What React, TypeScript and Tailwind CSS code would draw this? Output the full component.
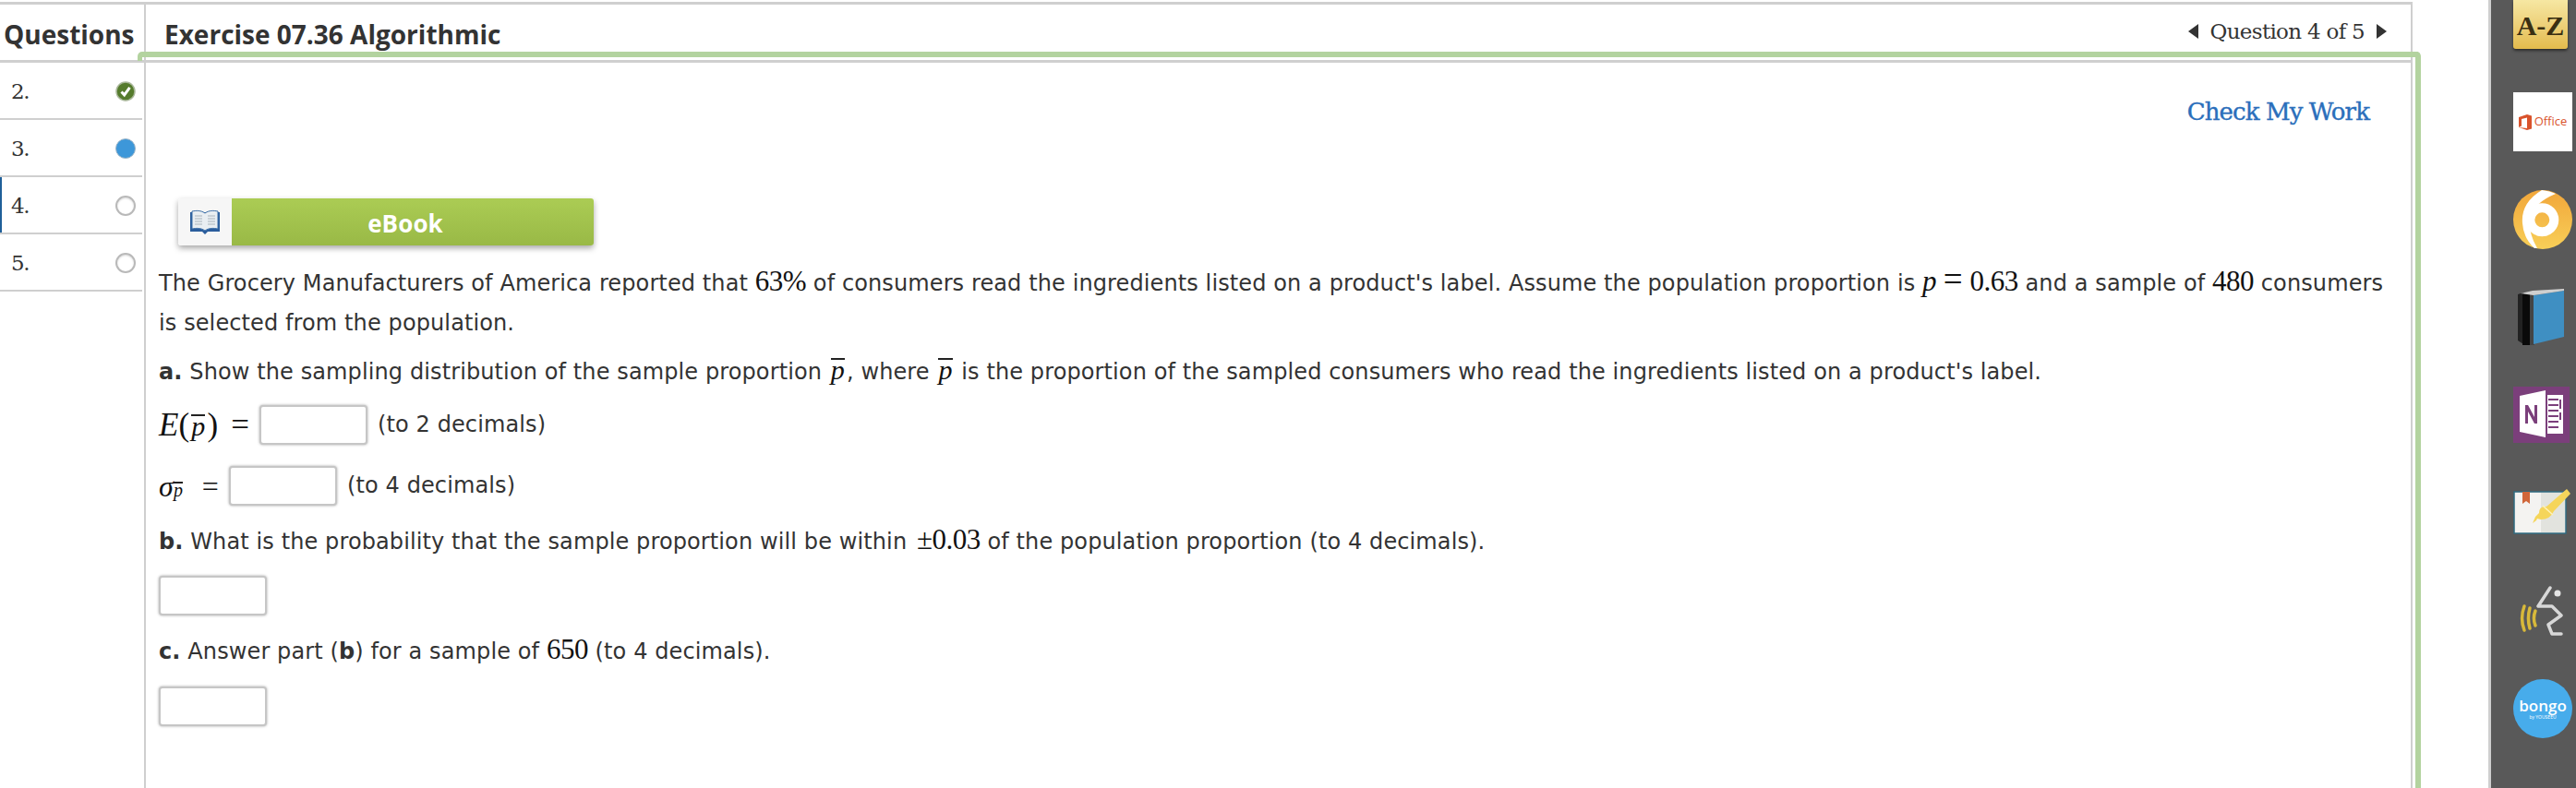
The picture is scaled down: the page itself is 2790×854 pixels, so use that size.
const bodyFont = "font-['DejaVu_Sans',sans-serif]";

function StatusDot({ kind }: { kind: "done" | "current" | "empty" }) {
  if (kind === "done") {
    return (
      <svg width="22" height="22" viewBox="0 0 22 22">
        <circle cx="11" cy="11" r="10" fill="#557b2c" stroke="#a9b79a" strokeWidth="1.5" />
        <path d="M6.5 11.5l3.2 3.4 5.8-8" fill="none" stroke="#fff" strokeWidth="3" />
      </svg>
    );
  }
  if (kind === "current") {
    return <div className="h-[22px] w-[22px] rounded-full border border-[#9db6c8] bg-[#3d97d9]" />;
  }
  return <div className="h-[22px] w-[22px] rounded-full border-2 border-[#b9b9b9] bg-white shadow-[inset_0_1px_2px_rgba(0,0,0,0.15)]" />;
}

function QuestionRow({ n, kind, active }: { n: string; kind: "done" | "current" | "empty"; active?: boolean }) {
  return (
    <div className={`flex h-[62px] w-[154px] items-center justify-between border-b-[2px] border-[#cfcfcf] pt-[2px] pr-[7px] pl-[12px] ${active ? "shadow-[inset_2px_0_0_#1f5f99]" : ""}`}>
      <span className="font-['DejaVu_Serif',serif] text-[23px] tracking-[-1.5px] text-[#333]">{n}</span>
      <StatusDot kind={kind} />
    </div>
  );
}

function Answer() {
  return <div className="h-[43px] w-[117px] shrink-0 rounded-[4px] border-[2px] border-[#c6c6c6] bg-white shadow-[0_0_3px_rgba(0,0,0,0.35)]" />;
}

function M({ children, i }: { children: React.ReactNode; i?: boolean }) {
  return <span className={`font-['Liberation_Serif',serif] text-[31px] leading-none tracking-[-0.5px] text-[#111] ${i ? "italic" : ""}`}>{children}</span>;
}

function PBar() {
  return <span className="mx-[2px] inline-block border-t-[2px] border-[#222] font-['Liberation_Serif',serif] text-[30px] leading-[22px] italic text-[#111]">p</span>;
}

function EBookButton() {
  return (
    <div className="ml-[35px] flex h-[51px] w-[450px] rounded-[3px] shadow-[0_3px_6px_rgba(0,0,0,0.35)]">
      <div className="flex w-[58px] items-center justify-center rounded-l-[3px] bg-[#f6f6f6]">
        <svg width="34" height="28" viewBox="0 0 34 28">
          <path d="M1 3h32v21H20l-3 3-3-3H1z" fill="#2a5d9c" />
          <path d="M3 2c5-1 10-1 14 2 4-3 9-3 14-2v19c-5-1-10-1-14 2-4-3-9-3-14-2z" fill="#e9eef2" stroke="#3b6ea8" />
          <path d="M6 7h8M6 10h8M6 13h8M6 16h8M20 7h8M20 10h8M20 13h8M20 16h8" stroke="#a9b3bb" strokeWidth="1.2" />
        </svg>
      </div>
      <div className="flex flex-1 items-center justify-center rounded-r-[3px] bg-gradient-to-b from-[#abcc54] to-[#99b946] pt-[4px] pr-[16px] font-['Open_Sans',sans-serif] text-[26px] font-bold text-white">
        eBook
      </div>
    </div>
  );
}

function RightRail() {
  return (
    <div className="flex h-full w-[95px] flex-col border-l-[3px] border-[#cfcfcf] bg-[#595959] pl-[24px]">
      <div className="flex h-[53px] w-[59px] items-end justify-center rounded-b-[3px] bg-gradient-to-b from-[#f6e7a2] to-[#e4bb4c] pb-[10px] font-['Liberation_Serif',serif] text-[30px] leading-none font-bold text-[#3a2f12] shadow-[0_2px_3px_rgba(0,0,0,0.5)]">
        A-Z
      </div>
      <div className="mt-[47px] flex h-[64px] w-[64px] items-center justify-center gap-[3px] bg-white font-['Open_Sans',sans-serif] text-[13px] text-[#d9532c]">
        <svg width="14" height="17" viewBox="0 0 14 17">
          <path d="M0 3l9-3 5 1.5v14L9 17l-9-3 9 1V3.500L3 5v7.500L0 14z" fill="#d9532c" />
        </svg>
        Office
      </div>
      <svg className="mt-[42px]" width="64" height="64" viewBox="0 0 64 64">
        <defs>
          <linearGradient id="og" x1="0" y1="0" x2="0" y2="1">
            <stop offset="0" stopColor="#f1a63a" />
            <stop offset="1" stopColor="#f8cf58" />
          </linearGradient>
        </defs>
        <circle cx="32" cy="32" r="32" fill="url(#og)" />
        <circle cx="31.300" cy="32.300" r="13" fill="none" stroke="#fff" strokeWidth="10" />
        <path d="M31 0Q8 14 10 36Q11 52 23 63L26 63Q16 46 18 30Q22 14 46 4Q40 1 31 0Z" fill="#fff" />
      </svg>
      <svg className="mt-[43px] ml-[5px]" width="52" height="61" viewBox="0 0 52 61">
        <path d="M0 6L6 4v56L0 56z" fill="#222" />
        <path d="M5 4h8v57H5z" fill="#0a0a0a" />
        <path d="M13 6h5v55h-5z" fill="#444" />
        <path d="M17 7L50 2v50L17 60z" fill="#3f8fc2" />
        <path d="M3 5L16 2l34-2v2L17 7z" fill="#cfcfcf" />
      </svg>
      <svg className="mt-[45px]" width="61" height="61" viewBox="0 0 61 61">
        <rect width="61" height="61" fill="#7b3f7b" />
        <path d="M7 10l28-6v51L7 49z" fill="#fff" />
        <path d="M37 9h17v42H37z" fill="#fff" />
        <path d="M38 14h11M38 20h11M38 26h11M38 32h11M38 38h11M38 44h11M51 14v10M51 28v8" stroke="#7b3f7b" strokeWidth="2" />
        <path d="M13 40V20h3l7 13V20h3v20h-3l-7-13v13z" fill="#7b3f7b" />
      </svg>
      <svg className="mt-[50px]" width="62" height="50" viewBox="0 0 62 50">
        <path d="M1 3h56v45H1z" fill="#f4f3f1" stroke="#2f6b80" strokeWidth="1.500" />
        <path d="M30 4h26v43H30z" fill="#e2e3de" />
        <path d="M10 3h8v13l-4-3-4 3z" fill="#d0663a" />
        <path d="M58 0L62 5L44 24Q40 33 30 33L26 32L25 34L21 37L24 30L28 26Q28 18 36 19Z" fill="#f5d55a" />
        <path d="M32 18L43 28" stroke="#fff3b8" strokeWidth="1.500" />
      </svg>
      <svg className="mt-[55px] ml-[5px]" width="50" height="57" viewBox="0 0 50 57">
        <path d="M35 2L22 22H37L47 32L33 42L37 52H47" fill="none" stroke="#d8d8d8" strokeWidth="3.500" strokeLinejoin="round" strokeLinecap="round" />
        <circle cx="43" cy="8" r="3.500" fill="#e4e4e4" />
        <path d="M7 22c-3 8-3 18 0 26M13 24c-2 7-2 15 0 22M19 27c-2 5-2 11 0 16" fill="none" stroke="#d8b93a" strokeWidth="3.500" strokeLinecap="round" />
      </svg>
      <div className="mt-[44px] flex h-[64px] w-[64px] flex-col items-center justify-center rounded-full bg-[#47aceb] text-white">
        <span className="font-['Open_Sans',sans-serif] text-[17px] leading-[18px] font-semibold">bongo</span>
        <span className="font-['Open_Sans',sans-serif] text-[5px] leading-[6px]">by YOUSEEU</span>
      </div>
    </div>
  );
}

export default function App() {
  return (
    <div className="relative flex h-[854px] w-[2790px] justify-between overflow-hidden bg-white">
      <div className="mt-[2px] flex h-[852px] w-[2613px] flex-col border-t-[3px] border-r-[2px] border-[#cfcfcf]">
        <div className="flex h-[63px] shrink-0 border-b-[3px] border-[#cfcfcf]">
          <div className="flex w-[158px] items-start border-r-[2px] border-[#cfcfcf] pt-[12px] pl-[4px] font-['Open_Sans',sans-serif] text-[28px] leading-[40px] font-bold text-[#333]">
            Questions
          </div>
          <div className="flex flex-1 items-start justify-between pt-[12px] pr-[26px] pl-[20px]">
            <span className="font-['Open_Sans',sans-serif] text-[28px] leading-[40px] font-bold text-[#333]">Exercise 07.36 Algorithmic</span>
            <div className="flex items-center gap-[13px] font-['DejaVu_Serif',serif] text-[23px] leading-[34px] tracking-[-0.7px] text-[#333]">
              <svg width="11" height="16" viewBox="0 0 11 16"><path d="M11 0v16L0 8z" fill="#333" /></svg>
              <span>Question 4 of 5</span>
              <svg width="11" height="16" viewBox="0 0 11 16"><path d="M0 0v16l11-8z" fill="#333" /></svg>
            </div>
          </div>
        </div>
        <div className="flex flex-1">
          <div className="w-[158px] shrink-0 border-r-[2px] border-[#cfcfcf]">
            <QuestionRow n="2." kind="done" />
            <QuestionRow n="3." kind="current" />
            <QuestionRow n="4." kind="empty" active />
            <QuestionRow n="5." kind="empty" />
          </div>
          <div className={`flex-1 ${bodyFont} text-[24px] tracking-[0.11px] text-[#333]`}>
            <div className="flex justify-end pt-[31px] pr-[45px] font-['DejaVu_Serif',serif] text-[26px] leading-[44px] tracking-[-0.9px] text-[#2a6ebb] [-webkit-text-stroke:0.4px_#2a6ebb]">
              Check My Work
            </div>
            <div className="mt-[72px]">
              <EBookButton />
            </div>
            <div className="mt-[18px] pl-[14px] leading-[43px]">
              <p>
                The Grocery Manufacturers of America reported that <M>63%</M> of consumers read the ingredients listed on a product's label. Assume the population proportion is <M i>p</M> <span className="font-['Liberation_Serif',serif] text-[37px] leading-none text-[#111]">=</span> <M>0.63</M> and a sample of <M>480</M> consumers
              </p>
              <p>is selected from the population.</p>
              <p className="mt-[10px]">
                <b>a.</b> Show the sampling distribution of the sample proportion <PBar />, where <PBar /> is the proportion of the sampled consumers who read the ingredients listed on a product's label.
              </p>
              <div className="mt-[14px] flex h-[43px] items-center gap-[11px] text-[#333]">
                <span className="flex w-[98px] items-center justify-between font-['Liberation_Serif',serif] text-[35px] leading-none text-[#111]">
                  <span><i>E</i>(<PBar />)</span>
                  <span>=</span>
                </span>
                <Answer />
                <span>(to 2 decimals)</span>
              </div>
              <div className="mt-[23px] flex h-[43px] items-center gap-[11px]">
                <span className="flex w-[65px] items-center justify-between font-['Liberation_Serif',serif] text-[32px] leading-none text-[#111]">
                  <span><i>σ</i><span className="inline-block border-t-[2px] border-[#222] text-[20px] leading-[15px] italic">p</span></span>
                  <span>=</span>
                </span>
                <Answer />
                <span>(to 4 decimals)</span>
              </div>
              <p className="mt-[18px]">
                <b>b.</b> What is the probability that the sample proportion will be within <span className="ml-[3px]"><M>±0.03</M></span> of the population proportion (to 4 decimals).
              </p>
              <div className="mt-[15px]"><Answer /></div>
              <p className="mt-[18px]">
                <b>c.</b> Answer part (<b>b</b>) for a sample of <M>650</M> (to 4 decimals).
              </p>
              <div className="mt-[16px]"><Answer /></div>
            </div>
          </div>
        </div>
      </div>
      <RightRail />
      {/* green focus frame sits over the panel */}
      <div className="pointer-events-none absolute top-[56px] left-[149px] h-[798px] w-[2473px] rounded-t-[5px] border-t-[6px] border-r-[6px] border-[#b3d39f]">
        <div className="absolute -top-[1px] left-0 h-[5px] w-[5px] bg-[#b3d39f]" />
      </div>
    </div>
  );
}
